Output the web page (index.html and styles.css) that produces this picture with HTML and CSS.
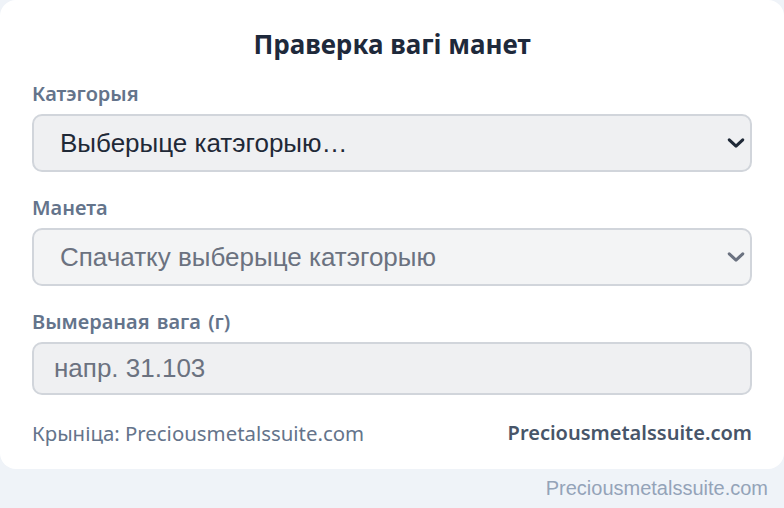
FILE: index.html
```html
<!DOCTYPE html>
<html lang="be">
<head>
<meta charset="utf-8">
<title>Праверка вагі манет</title>
<link rel="stylesheet" href="styles.css">
</head>
<body>
<main class="card">
  <h1 class="title">Праверка вагі манет</h1>

  <div class="field">
    <label class="label" for="category">Катэгорыя</label>
    <div class="select-wrap">
      <select id="category" class="control select">
        <option>Выберыце катэгорыю…</option>
      </select>
      <svg class="chevron" viewBox="0 0 20 12" width="18" height="11" aria-hidden="true">
        <path d="M2.5 2.5 L10 9.5 L17.5 2.5" fill="none" stroke="currentColor" stroke-width="3.4" stroke-linecap="round" stroke-linejoin="round"/>
      </svg>
    </div>
  </div>

  <div class="field">
    <label class="label" for="coin">Манета</label>
    <div class="select-wrap is-disabled">
      <select id="coin" class="control select" disabled>
        <option>Спачатку выберыце катэгорыю</option>
      </select>
      <svg class="chevron" viewBox="0 0 20 12" width="18" height="11" aria-hidden="true">
        <path d="M2.5 2.5 L10 9.5 L17.5 2.5" fill="none" stroke="currentColor" stroke-width="3.4" stroke-linecap="round" stroke-linejoin="round"/>
      </svg>
    </div>
  </div>

  <div class="field">
    <label class="label" for="weight">Вымераная вага (г)</label>
    <input id="weight" class="control input" type="text" placeholder="напр. 31.103">
  </div>

  <footer class="card-footer">
    <span class="source">Крыніца: Preciousmetalssuite.com</span>
    <span class="brand">Preciousmetalssuite.com</span>
  </footer>
</main>
<p class="credit">Preciousmetalssuite.com</p>
</body>
</html>
```

FILE: styles.css
```css
* {
  box-sizing: border-box;
}

html,
body {
  margin: 0;
  padding: 0;
}

body {
  background: #eff3f8;
  font-family: "Noto Sans", "Open Sans", sans-serif;
  color: #1e293b;
}

.card {
  background: #ffffff;
  border-radius: 16px;
  padding: 27px 32px 23px;
  display: flex;
  flex-direction: column;
}

.title {
  margin: 0 0 21px;
  font-size: 26px;
  line-height: 34px;
  font-weight: 700;
  text-align: center;
  color: #1e293b;
}

.field {
  display: flex;
  flex-direction: column;
  gap: 8px;
  margin-bottom: 24px;
}

.label {
  font-size: 20px;
  line-height: 24px;
  font-weight: 600;
  color: #64748b;
  word-spacing: 2px;
}

.select-wrap {
  position: relative;
  color: #1f2937;
}

.select-wrap.is-disabled {
  color: #6b7280;
}

.control {
  width: 100%;
  margin: 0;
  border: 2px solid #d1d5db;
  border-radius: 10px;
  background: #eff0f2;
  font-family: "Liberation Sans", Arial, sans-serif;
  font-size: 26px;
  outline: none;
}

.select {
  height: 58px;
  padding: 0 48px 0 26px;
  appearance: none;
  -webkit-appearance: none;
  color: #1f2937;
}

.select:disabled {
  background: #f3f4f5;
  color: #6b7280;
  opacity: 1;
}

.chevron {
  position: absolute;
  right: 7px;
  top: 50%;
  transform: translateY(-50%);
  pointer-events: none;
}

.input {
  height: 53px;
  padding: 0 20px;
  color: #1f2937;
}

.input::placeholder {
  color: #6b7280;
  opacity: 1;
}

.card-footer {
  display: flex;
  justify-content: space-between;
  align-items: center;
  margin-top: 1px;
  font-size: 20px;
  line-height: 26px;
  color: #64748b;
}

.source {
  font-size: 20.4px;
  color: #64748b;
}

.brand {
  font-weight: 600;
  color: #475569;
}

.credit {
  margin: 6px 16px 0 0;
  text-align: right;
  font-family: "Liberation Sans", Arial, sans-serif;
  font-size: 20px;
  line-height: 26px;
  color: #94a3b8;
}
```
